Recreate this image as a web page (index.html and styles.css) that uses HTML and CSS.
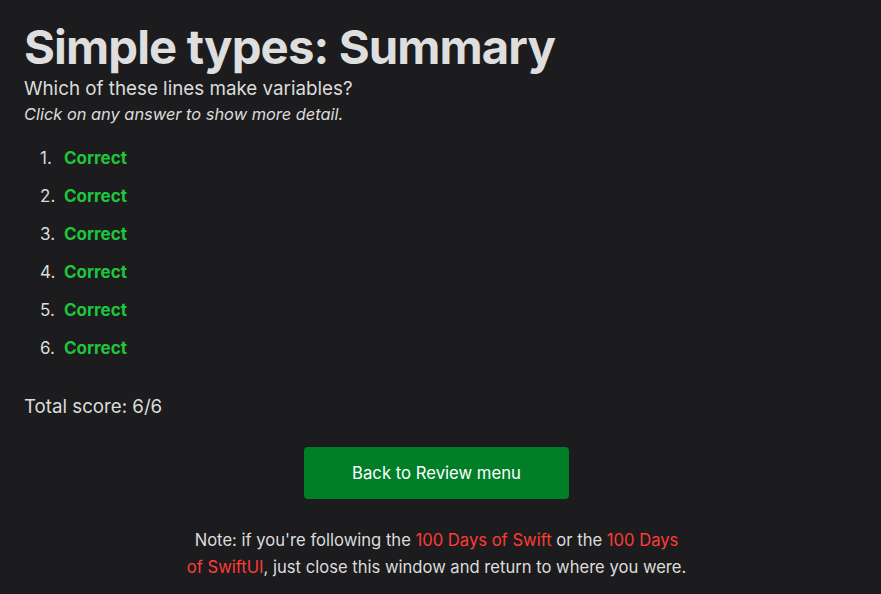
FILE: index.html
```html
<!DOCTYPE html>
<html lang="en">
<head>
<meta charset="utf-8">
<title>Simple types: Summary</title>
<link rel="stylesheet" href="styles.css">
</head>
<body>
<main class="page">
  <h1 class="title">Simple types: Summary</h1>
  <p class="question">Which of these lines make variables?</p>
  <p class="hint">Click on any answer to show more detail.</p>
  <ol class="answers">
    <li><span class="correct">Correct</span></li>
    <li><span class="correct">Correct</span></li>
    <li><span class="correct">Correct</span></li>
    <li><span class="correct">Correct</span></li>
    <li><span class="correct">Correct</span></li>
    <li><span class="correct">Correct</span></li>
  </ol>
  <p class="score">Total score: 6/6</p>
  <div class="actions">
    <a class="button" href="#">Back to Review menu</a>
  </div>
  <p class="note">Note: if you're following the <a href="#">100 Days of Swift</a> or the <a href="#">100 Days</a><br><a href="#">of SwiftUI</a>, just close this window and return to where you were.</p>
</main>
</body>
</html>
```
FILE: styles.css
```css
html, body {
  margin: 0;
  padding: 0;
  background: #1c1c1e;
}
body {
  font-family: Inter, "Noto Sans", sans-serif;
  color: #dcdcdc;
}
.page {
  padding: 18px 32px 0 24px;
}
.title {
  margin: 0;
  font-size: 47.3px;
  font-weight: 700;
  line-height: 58px;
  letter-spacing: -0.9px;
  color: #dedede;
}
.question {
  margin: 0;
  font-size: 18.8px;
  line-height: 26px;
}
.hint {
  margin: 0;
  font-size: 16.4px;
  font-style: italic;
  line-height: 25px;
}
.answers {
  margin: 12px 0 0;
  padding: 0 0 0 16px;
  font-size: 17px;
  list-style: none;
  counter-reset: item;
}
.answers li {
  line-height: 38px;
  counter-increment: item;
}
.answers li::before {
  content: counter(item) ".";
  display: inline-block;
  width: 24px;
  color: #dcdcdc;
}
.correct {
  color: #1fc63c;
  font-weight: 700;
}
.score {
  margin: 27px 0 0;
  font-size: 18.7px;
  line-height: 26px;
}
.actions {
  display: flex;
  justify-content: center;
  margin-top: 27px;
}
.button {
  display: flex;
  align-items: center;
  justify-content: center;
  width: 265px;
  height: 52px;
  background: #007f28;
  color: #fff;
  border-radius: 4px;
  text-decoration: none;
  font-size: 16.7px;
}
.note {
  margin: 28px 0 0;
  text-align: center;
  font-size: 16.6px;
  line-height: 27px;
}
.note a {
  color: #ff3b36;
  text-decoration: none;
}
```
